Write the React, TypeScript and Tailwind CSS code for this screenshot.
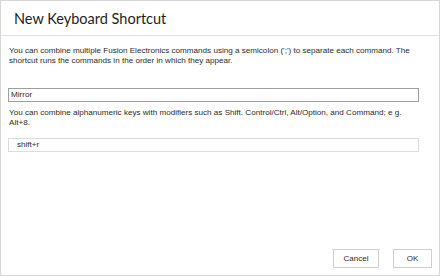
import React from 'react';

export default function App() {
  return (
    <div className="w-[440px] h-[276px] bg-white border border-[#d6d6d6] flex flex-col" style={{ fontFamily: '"Liberation Sans", Arial, sans-serif' }}>
      {/* Title bar */}
      <div className="h-[35px] border-b border-[#e2e2e2] pl-[13px] pt-[9px] shrink-0">
        <h1 className="text-[14.5px] leading-[18px] text-[#1e1e1e]" style={{ fontFamily: 'Lato, "Open Sans", sans-serif' }}>
          New Keyboard Shortcut
        </h1>
      </div>

      {/* Body */}
      <div className="flex-1 flex flex-col px-[7px] pt-[10px] text-[8.1px] leading-[10px] text-[#2b2b2b]">
        <p className="pl-[1px]">
          You can combine multiple Fusion Electronics commands using a semicolon (';') to separate each command. The
          shortcut runs the commands in the order in which they appear.
        </p>

        <div className="mt-[22px] w-[411px] h-[14px] border border-[#9e9e9e] flex items-center pl-[2px]">
          Mirror
        </div>

        <p className="mt-[6px] pl-[1px]">
          You can combine alphanumeric keys with modifiers such as Shift. Control/Ctrl, Alt/Option, and Command; e g.
          <br />
          Alt+8.
        </p>

        <div className="mt-[10px] w-[411px] h-[14px] border border-[#dcdcdc] flex items-center pl-[8px]">
          shift+r
        </div>

        <div className="flex-1" />

        <div className="flex justify-end gap-[14px] pb-[7px]">
          <button className="w-[46px] h-[19px] border border-[#cfcfcf] bg-white text-[8px] text-[#2b2b2b]">Cancel</button>
          <button className="w-[39px] h-[19px] border border-[#cfcfcf] bg-white text-[8px] text-[#2b2b2b]">OK</button>
        </div>
      </div>
    </div>
  );
}
